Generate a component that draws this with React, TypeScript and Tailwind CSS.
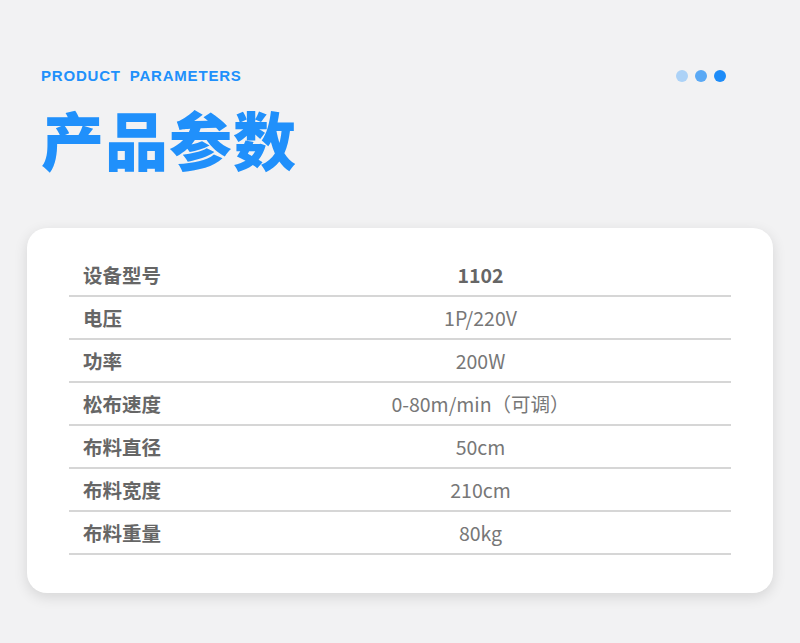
const rows: [string, string][] = [
  ['设备型号', '1102'],
  ['电压', '1P/220V'],
  ['功率', '200W'],
  ['松布速度', '0-80m/min（可调）'],
  ['布料直径', '50cm'],
  ['布料宽度', '210cm'],
  ['布料重量', '80kg'],
]

export default function App() {
  return (
    <div
      className="w-[800px] h-[643px] bg-[#f2f2f3] overflow-hidden"
      style={{ fontFamily: '"Noto Sans CJK SC", "Noto Sans", sans-serif' }}
    >
      <div className="flex items-start justify-between pl-[41px] pr-[74px] pt-[66px]">
        <div>
          <div
            className="text-[15px] font-bold tracking-[0.8px] leading-[20px] text-[#2090fb] [word-spacing:4px]"
            style={{ fontFamily: '"Liberation Sans", sans-serif' }}
          >
            PRODUCT PARAMETERS
          </div>
          <h1 className="mt-[16px] text-[63px] font-black leading-[72px] text-[#2090fb] tracking-[1px]">
            产品参数
          </h1>
        </div>
        <div className="flex gap-[7px] pt-[4px]">
          <span className="w-[12px] h-[12px] rounded-full bg-[#acd2f7]" />
          <span className="w-[12px] h-[12px] rounded-full bg-[#5aa9f5]" />
          <span className="w-[12px] h-[12px] rounded-full bg-[#1e8cf8]" />
        </div>
      </div>

      <div className="mx-[27px] mt-[54px] h-[365px] rounded-[20px] bg-white shadow-[0_4px_14px_rgba(0,0,0,0.12)] px-[42px] pt-[26px]">
        {rows.map(([k, v], i) => (
          <div key={k} className="flex h-[43px] items-center border-b-2 border-[#d6d6d6] text-[19.5px]">
            <div className="w-[161px] pl-[14px] font-bold text-[#666]">{k}</div>
            <div className={`flex-1 text-center ${i === 0 ? 'font-bold text-[#666]' : 'text-[#777]'}`}>{v}</div>
          </div>
        ))}
      </div>
    </div>
  )
}
